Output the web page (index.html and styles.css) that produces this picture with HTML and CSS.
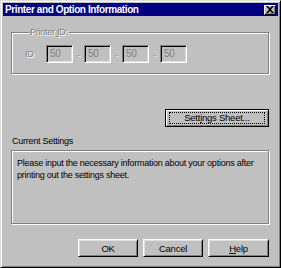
FILE: index.html
```html
<!DOCTYPE html>
<html>
<head>
<meta charset="utf-8">
<link rel="stylesheet" href="styles.css">
</head>
<body>
<div class="window">
  <div class="titlebar">
    <span class="title">Printer and Option Information</span>
    <span class="close"><svg width="8" height="7" viewBox="0 0 8 7"><path d="M0 0h2l2 2 2-2h2L5 3.5 8 7H6L4 5 2 7H0l3-3.5z" fill="#000"/></svg></span>
  </div>
  <div class="content">
    <fieldset class="group">
      <legend class="disabled">Printer <u>I</u>D:</legend>
      <div class="idrow">
        <span class="idlabel disabled">ID</span>
        <span class="field">50</span>
        <span class="dash disabled">-</span>
        <span class="field">50</span>
        <span class="dash disabled">-</span>
        <span class="field">50</span>
        <span class="dash disabled">-</span>
        <span class="field">50</span>
      </div>
    </fieldset>
    <div class="sheetrow">
      <button class="btn default"><span class="focus">Sett<u>i</u>ngs Sheet...</span></button>
    </div>
    <div class="curlabel">Current Settings</div>
    <div class="infobox">Please input the necessary information about your options after printing out the settings sheet.</div>
    <div class="buttons">
      <button class="btn">OK</button>
      <button class="btn">Cancel</button>
      <button class="btn help"><u>H</u>elp</button>
    </div>
  </div>
</div>
</body>
</html>
```
FILE: styles.css
```css
html, body {
  margin: 0;
  padding: 0;
  background: #c0c0c0;
}
body {
  font-family: "Liberation Sans", Arial, sans-serif;
  font-size: 9px;
  letter-spacing: -0.25px;
  color: #000;
}
.window {
  width: 281px;
  height: 268px;
  box-sizing: border-box;
  background: #c0c0c0;
  border-style: solid;
  border-width: 1px;
  border-color: #dfdfdf #000 #000 #dfdfdf;
  box-shadow: inset 1px 1px #fff, inset -1px -1px #808080;
  padding: 2px;
  display: flex;
  flex-direction: column;
}
.titlebar {
  height: 13px;
  flex: none;
  background: #000080;
  display: flex;
  align-items: center;
  justify-content: space-between;
  padding: 0 2px 0 2px;
}
.title {
  color: #fff;
  font-weight: bold;
  font-size: 10px;
  letter-spacing: -0.4px;
}
.close {
  width: 12px;
  height: 10px;
  box-sizing: border-box;
  background: #c0c0c0;
  border-style: solid;
  border-width: 1px;
  border-color: #fff #000 #000 #fff;
  box-shadow: inset -1px -1px #808080;
  display: flex;
  align-items: center;
  justify-content: center;
}
.close svg { display: block; }
.content {
  padding: 0 9px 0 8px;
  display: flex;
  flex-direction: column;
}
.disabled {
  color: #808080;
  text-shadow: 1px 1px 0 #fff;
}
.group {
  margin: 11px 0 0 0;
  padding: 8px 0 0 13px;
  height: 47px;
  box-sizing: border-box;
  border: 1px solid #808080;
  box-shadow: inset 1px 1px #fff, 1px 1px #fff;
  min-width: 0;
}
.group legend {
  padding: 0 1px;
  margin-left: 4px;
  background: #c0c0c0;
  line-height: 10px;
}
.idrow {
  display: flex;
  align-items: center;
  height: 18px;
}
.idlabel {
  width: 21px;
}
.field {
  width: 27px;
  height: 18px;
  box-sizing: border-box;
  border-style: solid;
  border-width: 1px;
  border-color: #808080 #fff #fff #808080;
  box-shadow: inset 1px 1px #000, inset -1px -1px #dfdfdf;
  color: #808080;
  padding: 2px 0 0 3px;
  font-size: 10px;
  line-height: 12px;
}
.dash {
  width: 11px;
  text-align: center;
  font-size: 8px;
}
.sheetrow {
  display: flex;
  justify-content: flex-end;
  margin-top: 35px;
}
.btn {
  font-family: "Liberation Sans", Arial, sans-serif;
  font-size: 9.5px;
  letter-spacing: -0.25px;
  color: #000;
  background: #c0c0c0;
  height: 18px;
  width: 60px;
  box-sizing: border-box;
  border-style: solid;
  border-width: 1px;
  border-color: #fff #000 #000 #fff;
  box-shadow: inset 1px 1px #dfdfdf, inset -1px -1px #808080;
  padding: 0;
  margin: 0;
  display: flex;
  align-items: center;
  justify-content: center;
}
.btn.help { width: 61px; }
.btn.default {
  width: 104px;
  border: 1px solid #000;
  box-shadow: inset 1px 1px #fff, inset -1px -1px #808080;
  padding: 2px 3px;
}
.focus {
  flex: 1;
  align-self: stretch;
  border: 1px dotted #000;
  display: flex;
  align-items: center;
  justify-content: center;
  line-height: 10px;
}
.curlabel {
  margin-top: 9px;
  line-height: 11px;
  padding-left: 1px;
}
.infobox {
  margin-top: 3px;
  height: 74px;
  box-sizing: border-box;
  border: 1px solid #808080;
  box-shadow: inset 1px 1px #fff, 1px 1px #fff;
  padding: 6px 4px 0 5px;
  line-height: 12px;
}
.buttons {
  display: flex;
  justify-content: flex-end;
  gap: 5px;
  margin-top: 15px;
}
```
